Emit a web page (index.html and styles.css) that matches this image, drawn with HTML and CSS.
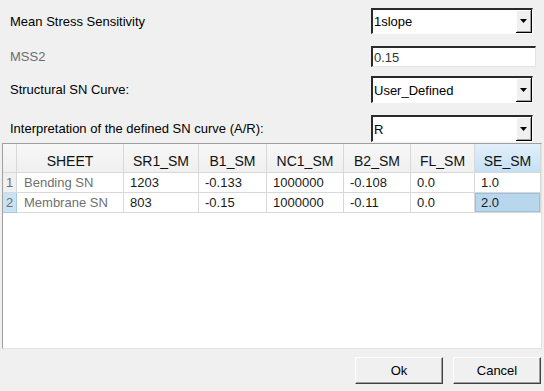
FILE: index.html
```html
<!DOCTYPE html>
<html lang="en">
<head>
    <meta charset="UTF-8">
    <title>SN Curve Settings</title>
    <link rel="stylesheet" href="styles.css">
</head>
<body>
    <div class="dialog">
        <!-- Settings form -->
        <div class="form">
            <div class="form-row row-1">
                <div class="label">Mean Stress Sensitivity</div>
                <div class="combo">
                    <span class="combo-text">1slope</span>
                    <span class="combo-btn"><svg width="7" height="4" viewBox="0 0 7 4"><polygon points="0,0 7,0 3.5,4" fill="#000"/></svg></span>
                </div>
            </div>
            <div class="form-row row-2">
                <div class="label label-muted">MSS2</div>
                <div class="text-field">0.15</div>
            </div>
            <div class="form-row row-3">
                <div class="label">Structural SN Curve:</div>
                <div class="combo">
                    <span class="combo-text">User_Defined</span>
                    <span class="combo-btn"><svg width="7" height="4" viewBox="0 0 7 4"><polygon points="0,0 7,0 3.5,4" fill="#000"/></svg></span>
                </div>
            </div>
            <div class="form-row row-4">
                <div class="label">Interpretation of the defined SN curve (A/R):</div>
                <div class="combo">
                    <span class="combo-text">R</span>
                    <span class="combo-btn"><svg width="7" height="4" viewBox="0 0 7 4"><polygon points="0,0 7,0 3.5,4" fill="#000"/></svg></span>
                </div>
            </div>
        </div>

        <!-- SN table -->
        <div class="grid-box">
            <div class="grid">
                <div class="hd corner"></div>
                <div class="hd">SHEET</div>
                <div class="hd">SR1_SM</div>
                <div class="hd">B1_SM</div>
                <div class="hd">NC1_SM</div>
                <div class="hd">B2_SM</div>
                <div class="hd">FL_SM</div>
                <div class="hd hd-active">SE_SM</div>

                <div class="rn">1</div>
                <div class="cell muted">Bending SN</div>
                <div class="cell">1203</div>
                <div class="cell">-0.133</div>
                <div class="cell">1000000</div>
                <div class="cell">-0.108</div>
                <div class="cell">0.0</div>
                <div class="cell">1.0</div>

                <div class="rn rn-active">2</div>
                <div class="cell muted">Membrane SN</div>
                <div class="cell">803</div>
                <div class="cell">-0.15</div>
                <div class="cell">1000000</div>
                <div class="cell">-0.11</div>
                <div class="cell">0.0</div>
                <div class="cell selected">2.0</div>
            </div>
        </div>

        <!-- Buttons -->
        <div class="actions">
            <button class="btn">Ok</button>
            <button class="btn">Cancel</button>
        </div>
    </div>
</body>
</html>
```

FILE: styles.css
```css
/* General */
body {
    margin: 0;
    background: #f0f0f0;
    font-family: "Liberation Sans", Arial, sans-serif;
    font-size: 13px;
    color: #000;
}

.dialog {
    width: 544px;
    height: 391px;
    display: flex;
    flex-direction: column;
}

/* Form */
.form {
    display: flex;
    flex-direction: column;
    padding: 0 8px 0 10px;
}

.form-row {
    display: flex;
    align-items: center;
    justify-content: space-between;
}

.row-1 {
    margin-top: 8px;
    height: 26px;
}

.row-2 {
    margin-top: 12px;
    height: 21px;
}

.row-3 {
    margin-top: 9px;
    height: 27px;
}

.row-4 {
    margin-top: 12px;
    height: 27px;
}

.label {
    color: #000;
}

.label-muted {
    color: #6d6d6d;
}

/* Combo box */
.combo {
    box-sizing: border-box;
    width: 162px;
    height: 100%;
    margin-right: 3px;
    display: flex;
    background: #fff;
    border-style: solid;
    border-width: 2px 1px 1px 2px;
    border-color: #2a2a2a #fcfcfc #fcfcfc #2a2a2a;
}

.combo-text {
    flex: 1;
    padding-left: 1px;
    display: flex;
    align-items: center;
}

.combo-btn {
    box-sizing: border-box;
    width: 16px;
    background: #f0f0f0;
    border-right: 1px solid #000;
    border-bottom: 1px solid #000;
    box-shadow: inset 1px 1px 0 #fff, inset -1px -1px 0 #a0a0a0;
    display: flex;
    align-items: center;
    justify-content: center;
}

/* Text field */
.text-field {
    box-sizing: border-box;
    width: 165px;
    height: 100%;
    background: #fff;
    border-style: solid;
    border-width: 2px 1px 1px 2px;
    border-color: #2a2a2a #e3e3e3 #e3e3e3 #2a2a2a;
    color: #333;
    padding-left: 1px;
    display: flex;
    align-items: center;
}

/* Table */
.grid-box {
    box-sizing: border-box;
    margin: 1px 2px 0 2px;
    height: 206px;
    background: #fff;
    border-style: solid;
    border-width: 1px;
    border-color: #a0a0a0 #e3e3e3 #e3e3e3 #a0a0a0;
}

.grid {
    display: grid;
    grid-template-columns: 14px 107px 75px 68px 77px 67px 64px 66px;
    grid-template-rows: 29px 20px 20px;
}

.grid > div {
    box-sizing: border-box;
    border-right: 1px solid #d8d8d8;
    border-bottom: 1px solid #d8d8d8;
    white-space: nowrap;
    overflow: hidden;
}

.hd {
    background: linear-gradient(#f7f7f7, #f0f0f0);
    display: flex;
    align-items: flex-end;
    justify-content: center;
    padding-bottom: 3px;
    font-size: 14px;
    color: #111;
}

.hd-active {
    background: linear-gradient(#e3f0fb, #c4e0f5);
}

.rn {
    background: #f0f0f0;
    color: #707070;
    display: flex;
    align-items: center;
    justify-content: center;
}

.rn-active {
    background: #c9e2f4;
    border-color: #a6c8e2 !important;
}

.cell {
    display: flex;
    align-items: center;
    padding-left: 6px;
    color: #1a1a1a;
}

.cell.muted {
    padding-left: 7px;
    color: #707070;
}

.cell.selected {
    background: #b8d7ec;
    box-shadow: inset 0 0 0 1px #9dc1db;
}

/* Buttons */
.actions {
    display: flex;
    justify-content: flex-end;
    gap: 10px;
    margin: 8px 3px 0 0;
}

.btn {
    box-sizing: border-box;
    width: 88px;
    height: 27px;
    background: #f0f0f0;
    font-family: "Liberation Sans", Arial, sans-serif;
    font-size: 13px;
    color: #000;
    border-style: solid;
    border-width: 1px;
    border-color: #fff #404040 #404040 #fff;
    box-shadow: inset -1px -1px 0 #a0a0a0;
    padding: 0;
}
```
